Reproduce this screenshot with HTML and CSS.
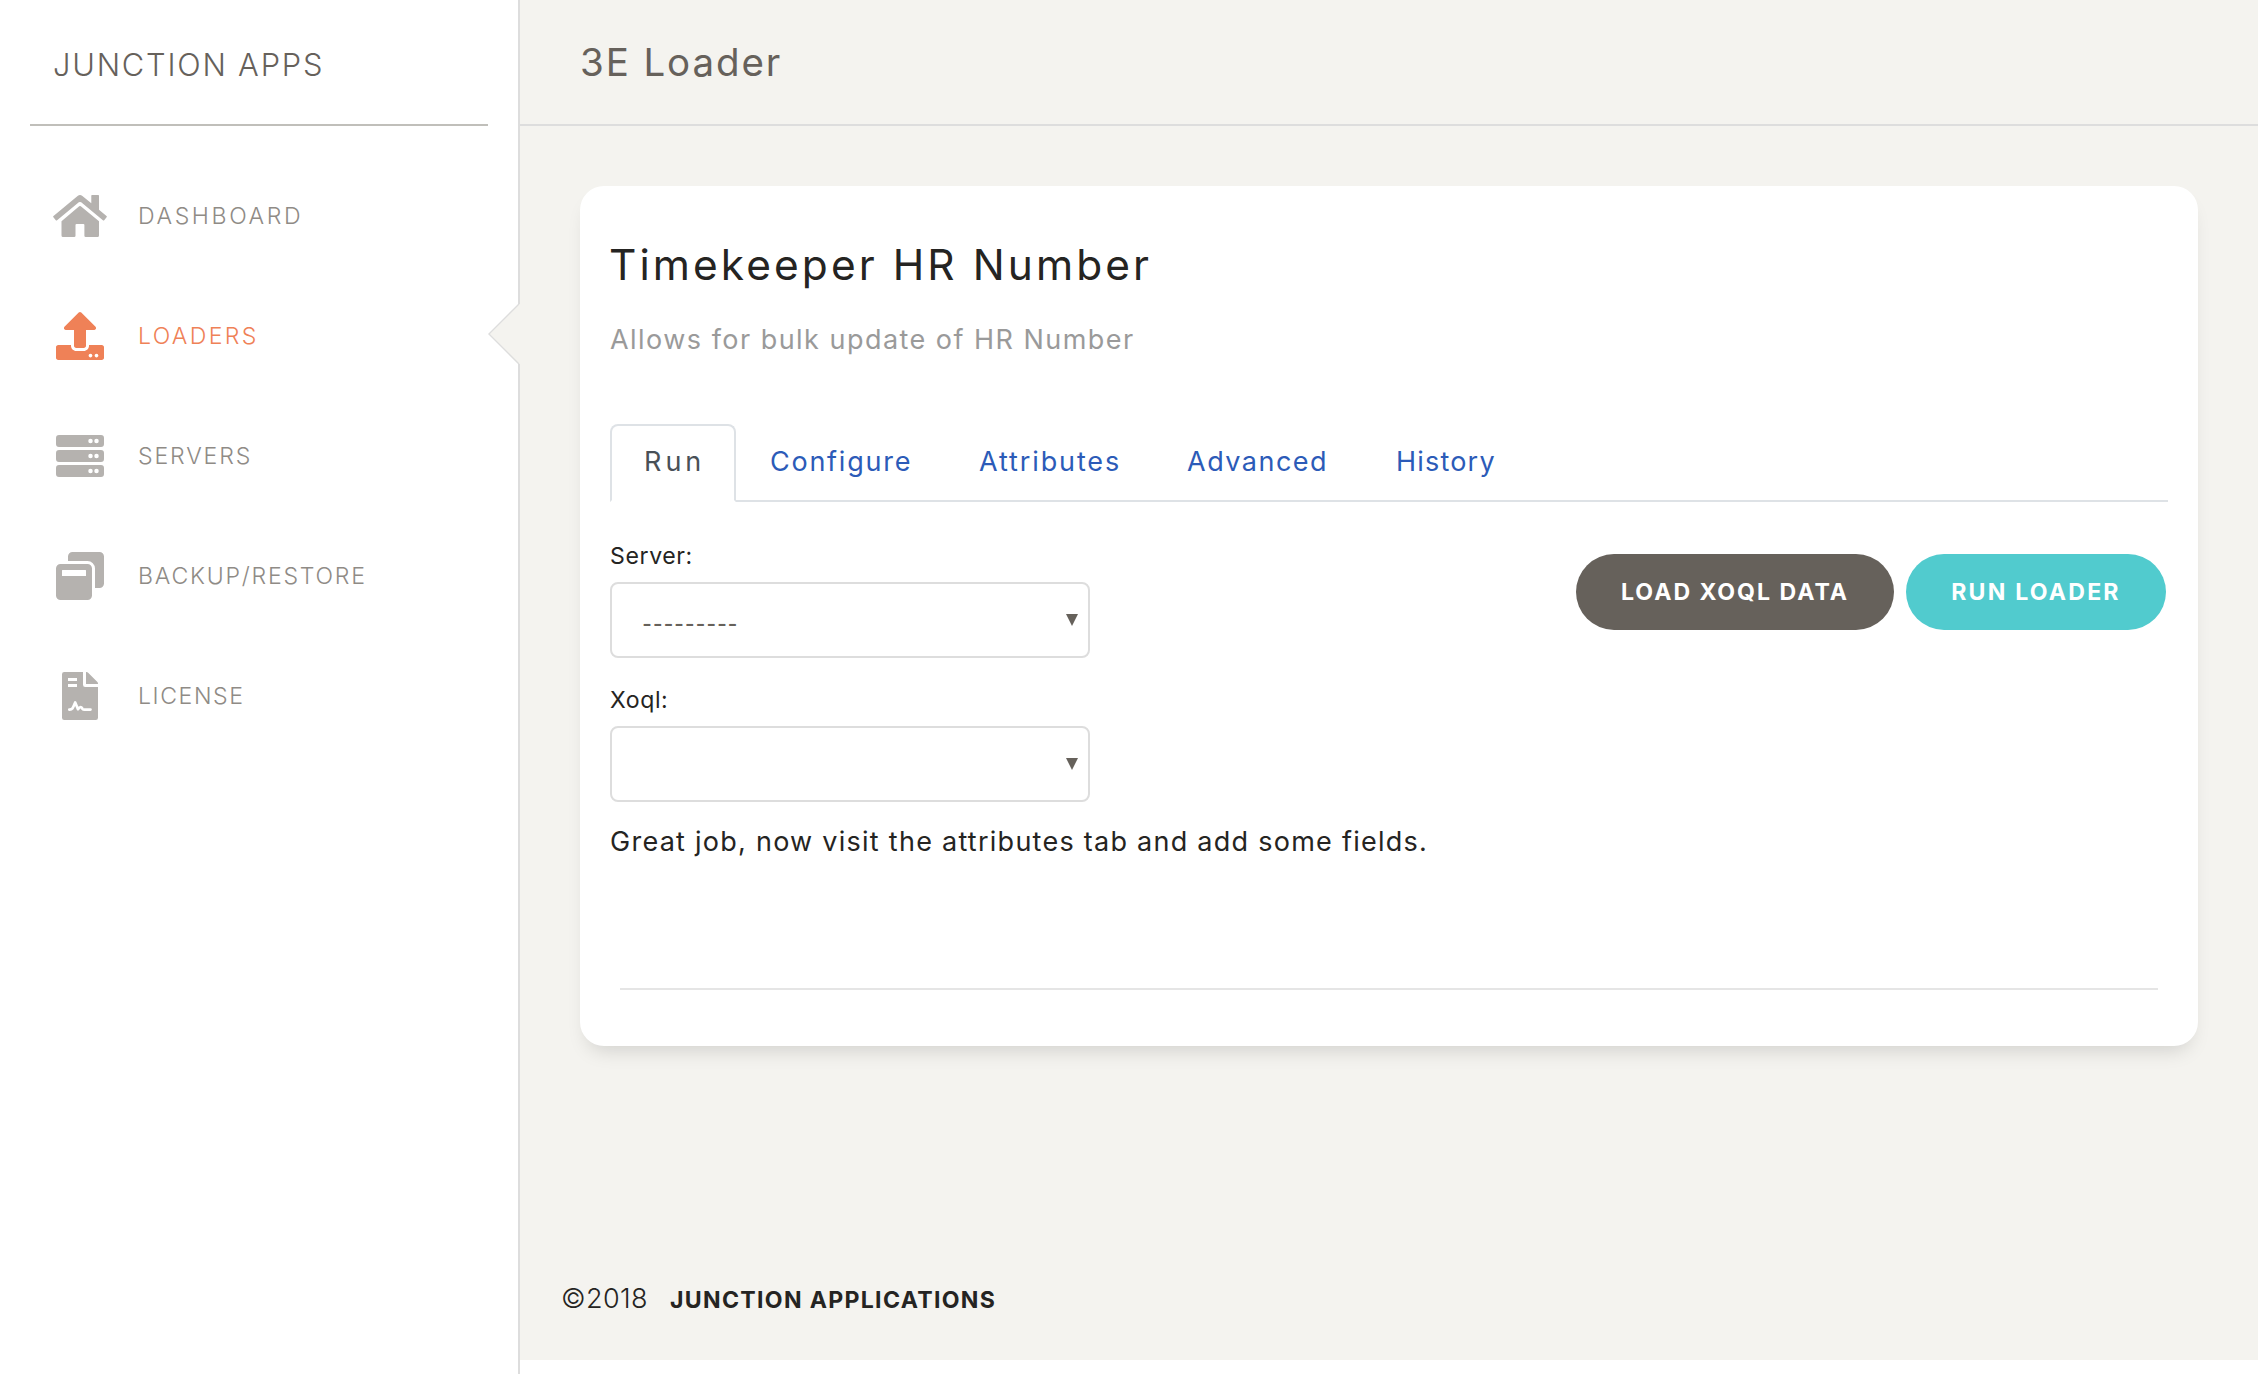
FILE: index.html
```html
<!DOCTYPE html>
<html lang="en">
<head>
<meta charset="utf-8">
<title>3E Loader</title>
<link rel="stylesheet" href="styles.css">
</head>
<body>
<div class="wrapper">
  <aside class="sidebar">
    <div class="logo">JUNCTION APPS</div>
    <nav class="nav">
      <a class="nav-item">
        <span class="nav-icon"><svg width="54" height="42" viewBox="0 0 54 42"><path d="M24.6.9Q27-.8 29.4.9L38.3 8.3V.6Q38.3 0 39 0H45.300Q46 0 46 .7V14.700L53.500 20.900Q54.200 21.500 53.600 22.200L51.200 25.200Q50.600 25.800 49.900 25.200L28.200 7.300Q27 6.500 25.800 7.300L4.100 25.200Q3.400 25.800 2.800 25.200L.4 22.200Q-.2 21.500.5 20.900Z"/><path d="M26.200 11.300Q27 10.700 27.800 11.300L46 26.200V40.500Q46 42 44.500 42H32.700Q31.400 42 31.400 40.700V30Q31.400 29 30.400 29H23.500Q22.500 29 22.500 30V40.700Q22.500 42 21.200 42H10Q8.500 42 8.500 40.500V26.200Z"/></svg></span>
        <span class="nav-text t-dashboard">DASHBOARD</span>
      </a>
      <a class="nav-item active">
        <span class="nav-icon"><svg width="48" height="48" viewBox="0 0 512 512"><path d="M296 384h-80c-13.300 0-24-10.700-24-24V192h-87.700c-17.800 0-26.700-21.500-14.100-34.100L242.300 5.700c7.500-7.500 19.800-7.500 27.300 0l152.200 152.200c12.600 12.600 3.700 34.100-14.100 34.100H320v168c0 13.300-10.700 24-24 24zm216-8v112c0 13.300-10.700 24-24 24H24c-13.300 0-24-10.700-24-24V376c0-13.300 10.700-24 24-24h136v8c0 30.900 25.100 56 56 56h80c30.900 0 56-25.100 56-56v-8h136c13.300 0 24 10.700 24 24zm-124 88c0-11-9-20-20-20s-20 9-20 20 9 20 20 20 20-9 20-20zm64 0c0-11-9-20-20-20s-20 9-20 20 9 20 20 20 20-9 20-20z"/></svg></span>
        <span class="nav-text t-loaders">LOADERS</span>
        <svg class="notch" width="32" height="60" viewBox="0 0 32 60"><path class="notch-fill" d="M32 0H30.500L.7 30 30.500 60H32Z"/><path class="notch-line" d="M31 0 .9 30 31 60"/></svg>
      </a>
      <a class="nav-item">
        <span class="nav-icon"><svg width="48" height="42" viewBox="0 0 48 42"><path fill-rule="evenodd" d="M3 0H45a3 3 0 0 1 3 3V9a3 3 0 0 1-3 3H3a3 3 0 0 1-3-3V3a3 3 0 0 1 3-3ZM34.500 3.750a2.250 2.250 0 1 0 0 4.500a2.250 2.250 0 1 0 0-4.500ZM40.500 3.750a2.250 2.250 0 1 0 0 4.500a2.250 2.250 0 1 0 0-4.500ZM3 15H45a3 3 0 0 1 3 3V24a3 3 0 0 1-3 3H3a3 3 0 0 1-3-3V18a3 3 0 0 1 3-3ZM34.500 18.750a2.250 2.250 0 1 0 0 4.500a2.250 2.250 0 1 0 0-4.500ZM40.500 18.750a2.250 2.250 0 1 0 0 4.500a2.250 2.250 0 1 0 0-4.500ZM3 30H45a3 3 0 0 1 3 3V39a3 3 0 0 1-3 3H3a3 3 0 0 1-3-3V33a3 3 0 0 1 3-3ZM34.500 33.750a2.250 2.250 0 1 0 0 4.500a2.250 2.250 0 1 0 0-4.500ZM40.500 33.750a2.250 2.250 0 1 0 0 4.500a2.250 2.250 0 1 0 0-4.500Z"/></svg></span>
        <span class="nav-text t-servers">SERVERS</span>
      </a>
      <a class="nav-item">
        <span class="nav-icon"><svg width="48" height="48" viewBox="0 0 48 48"><path d="M16.500 0H43.500A4.500 4.500 0 0 1 48 4.500V31.500A4.500 4.500 0 0 1 43.500 36H39V16.500A7.500 7.500 0 0 0 31.500 9H12V4.500A4.500 4.500 0 0 1 16.500 0Z"/><path fill-rule="evenodd" d="M4.500 12H31.500A4.500 4.500 0 0 1 36 16.500V43.500A4.500 4.500 0 0 1 31.500 48H4.500A4.500 4.500 0 0 1 0 43.500V16.500A4.500 4.500 0 0 1 4.500 12ZM6.500 18Q6 18 6 18.500V24H30V18.500Q30 18 29.500 18Z"/></svg></span>
        <span class="nav-text t-backup">BACKUP/RESTORE</span>
      </a>
      <a class="nav-item">
        <span class="nav-icon"><svg width="36" height="48" viewBox="0 0 36 48"><path fill-rule="evenodd" d="M2.200 0H21V12.800Q21 15 23.200 15H36V45.800Q36 48 33.800 48H2.200Q0 48 0 45.800V2.200Q0 0 2.200 0ZM6 6V9H15V6ZM6 12V15H15V12Z"/><path d="M24 0H24.600Q25.300 0 25.900.6L35.400 10.100Q36 10.700 36 11.400V12H24Z"/><path class="signature" d="M7.300 37.600C10.500 37.800 11 36 13.200 30.400L16 37.200C17.300 35 19 34.300 20.500 36.800Q21.200 37.700 23 37.600H28.500"/></svg></span>
        <span class="nav-text t-license">LICENSE</span>
      </a>
    </nav>
  </aside>
  <main class="main">
    <header class="topbar">3E Loader</header>
    <section class="card">
      <h1 class="title">Timekeeper HR Number</h1>
      <p class="subtitle">Allows for bulk update of HR Number</p>
      <div class="tabs">
        <a class="tab tab-run">Run</a>
        <a class="tab tab-configure">Configure</a>
        <a class="tab tab-attributes">Attributes</a>
        <a class="tab tab-advanced">Advanced</a>
        <a class="tab tab-history">History</a>
      </div>
      <div class="panel">
        <form class="form">
          <label class="label label-server">Server:</label>
          <div class="field"><select class="select"><option>---------</option></select><svg class="caret" width="12" height="12" viewBox="0 0 12 12"><path d="M0 0H12L6 12Z"/></svg></div>
          <label class="label">Xoql:</label>
          <div class="field"><select class="select"><option></option></select><svg class="caret" width="12" height="12" viewBox="0 0 12 12"><path d="M0 0H12L6 12Z"/></svg></div>
        </form>
        <div class="actions">
          <button class="btn btn-load">LOAD XOQL DATA</button>
          <button class="btn btn-run">RUN LOADER</button>
        </div>
      </div>
      <p class="message">Great job, now visit the attributes tab and add some fields.</p>
      <hr class="rule">
    </section>
    <footer class="footer"><span class="year">©2018</span><strong class="company">JUNCTION APPLICATIONS</strong></footer>
  </main>
</div>
</body>
</html>
```
FILE: styles.css
```css
* { box-sizing: border-box; }
body {
  margin: 0;
  background: #fff;
  color: #252422;
  font-family: Inter, "Liberation Sans", sans-serif;
  font-size: 27px;
  line-height: 40px;
  white-space: nowrap;
}
h1, p { margin: 0; font-weight: 400; }
svg { display: block; fill: currentColor; }

.wrapper { display: flex; height: 1374px; overflow: hidden; }

/* Sidebar */
.sidebar { width: 520px; flex: none; border-right: 2px solid #ddd; }
.logo {
  height: 126px;
  margin: 0 30px;
  padding: 45px 0 0 23px;
  border-bottom: 2px solid #c0bfba;
  color: #66615b;
  font-size: 30.8px;
  font-weight: 300;
  letter-spacing: 1.79px;
}
.nav { padding-top: 30px; }
.nav-item {
  position: relative;
  display: flex;
  align-items: center;
  gap: 28px;
  height: 120px;
  padding-left: 50px;
  color: #b5b2af;
}
.nav-icon { width: 60px; display: flex; justify-content: center; }
.nav-text { color: #8f8b86; font-size: 23.1px; font-weight: 300; }
.active, .active .nav-text { color: #ef8157; }
.t-dashboard { letter-spacing: 2.6px; }
.t-loaders { letter-spacing: 2.32px; }
.t-servers { letter-spacing: 1.85px; }
.t-backup { letter-spacing: 1.76px; }
.t-license { letter-spacing: 1.57px; }
.signature {
  fill: none;
  stroke: #fff;
  stroke-width: 2.7px;
  stroke-linecap: round;
  stroke-linejoin: round;
}
.notch { position: absolute; right: -2px; top: 28px; }
.notch-fill { fill: #f4f3ef; }
.notch-line { fill: none; stroke: #ddd; stroke-width: 1.400px; }

/* Main column */
.main {
  flex: 1;
  display: flex;
  flex-direction: column;
  height: 1360px;
  background: #f4f3ef;
}
.topbar {
  height: 126px;
  padding: 42px 0 0 60px;
  border-bottom: 2px solid #ddd;
  color: #66615b;
  font-size: 38.5px;
  letter-spacing: 1.9px;
}
.card {
  height: 860px;
  margin: 60px 60px 0;
  padding: 49px 30px 0;
  border-radius: 24px;
  background: #fff;
  box-shadow: 0 12px 20px -8px rgba(0, 0, 0, .15);
}
.title {
  margin-left: -1px;
  font-size: 42.4px;
  line-height: 59px;
  letter-spacing: 3.09px;
}
.subtitle { margin-top: 26px; color: #9a9a9a; letter-spacing: 1.47px; }

.tabs {
  display: flex;
  height: 78px;
  margin-top: 64px;
  border-bottom: 2px solid #dee2e6;
}
.tab {
  height: 78px;
  padding: 18px 0 0 34px;
  color: #2c5bb8;
}
.tab-run {
  width: 126px;
  padding: 16px 0 0 32px;
  border: 2px solid #dee2e6;
  border-bottom-color: #fff;
  border-radius: 8px 8px 0 0;
  background: #fff;
  color: #495057;
  letter-spacing: 4px;
}
.tab-configure { width: 209px; letter-spacing: 1.75px; }
.tab-attributes { width: 208px; letter-spacing: 1.88px; }
.tab-advanced { width: 209px; letter-spacing: 1.5px; }
.tab-history { letter-spacing: 1.2px; }

.panel { display: flex; justify-content: space-between; padding-top: 38px; }
.form { width: 480px; }
.label {
  display: block;
  margin-bottom: 10px;
  font-size: 23.1px;
  line-height: 32px;
  letter-spacing: .6px;
}
.field + .label { margin-top: 26px; }
.field { position: relative; }
.select {
  display: block;
  appearance: none;
  width: 100%;
  height: 76px;
  margin: 0;
  padding: 5px 30px 0;
  border: 2px solid #ddd;
  border-radius: 8px;
  background: #fff;
  color: #66615b;
  font: 400 27px/40px Lato, sans-serif;
  letter-spacing: .67px;
}
.caret { position: absolute; right: 12px; top: 32px; color: #66615b; }

.actions { display: flex; gap: 12px; padding: 14px 2px 0 0; }
.btn {
  height: 76px;
  padding: 0;
  border: 0;
  border-radius: 40px;
  color: #fff;
  font: 700 23.1px/32px Inter, sans-serif;
  white-space: nowrap;
}
.btn-load { width: 318px; background: #66615b; letter-spacing: 1.99px; }
.btn-run { width: 260px; background: #51cbce; letter-spacing: 2.2px; }

.message { margin-top: 20px; letter-spacing: 1.26px; }
.rule { margin: 126px 10px 0; border: 0; border-top: 2px solid #e5e5e5; }

.footer {
  display: flex;
  align-items: baseline;
  gap: 24px;
  margin-top: auto;
  padding: 0 0 40px 41px;
}
.year { width: 85px; font-weight: 300; letter-spacing: .36px; }
.company { font-size: 23.1px; font-weight: 700; letter-spacing: 1.31px; }
```
